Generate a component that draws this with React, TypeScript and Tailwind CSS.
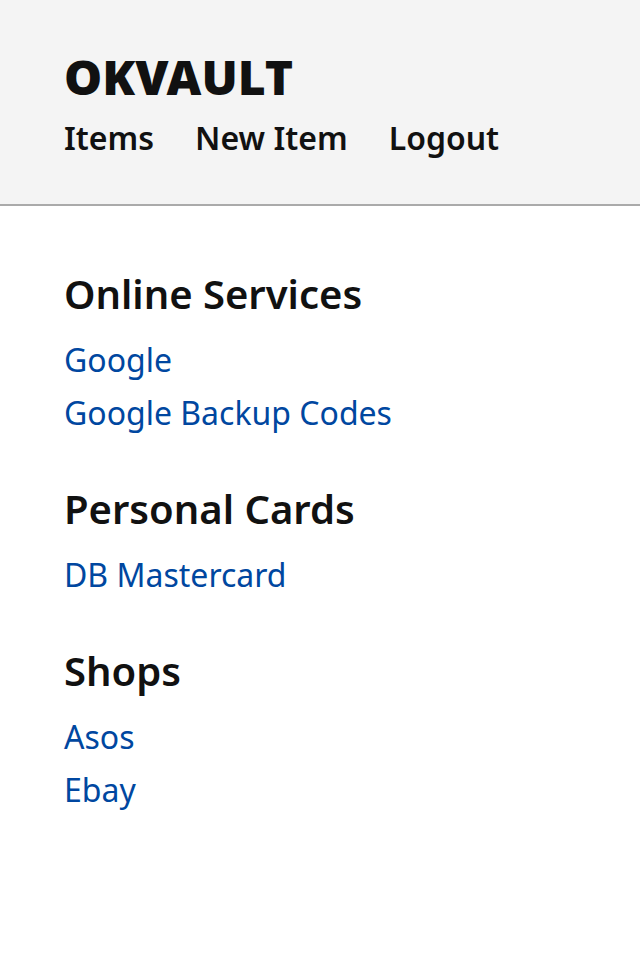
export default function App() {
  const groups = [
    { name: "Online Services", items: ["Google", "Google Backup Codes"] },
    { name: "Personal Cards", items: ["DB Mastercard"] },
    { name: "Shops", items: ["Asos", "Ebay"] },
  ];

  return (
    <div className="min-h-[960px] bg-white text-[#111] font-['Noto_Sans',sans-serif]">
      {/* HEADER */}
      <header className="bg-[#f4f4f4] border-b-2 border-[#aaa] h-[206px] px-16 pt-[48px]">
        <h1 className="text-[48px] font-black leading-[58px]">OKVAULT</h1>
        <nav className="flex gap-[41px] text-[32px] font-semibold leading-[48px] mt-[8px]">
          <a>Items</a>
          <a>New Item</a>
          <a>Logout</a>
        </nav>
      </header>

      {/* LISTADO */}
      <main className="px-16 pt-[63px]">
        {groups.map((g) => (
          <section key={g.name} className="mb-[45px]">
            <h2 className="text-[40px] font-semibold leading-[50px] mb-[14px]">
              {g.name}
            </h2>
            <ul>
              {g.items.map((i) => (
                <li key={i} className="text-[32px] leading-[53px] text-[#0047a0]">
                  <a>{i}</a>
                </li>
              ))}
            </ul>
          </section>
        ))}
      </main>
    </div>
  );
}
